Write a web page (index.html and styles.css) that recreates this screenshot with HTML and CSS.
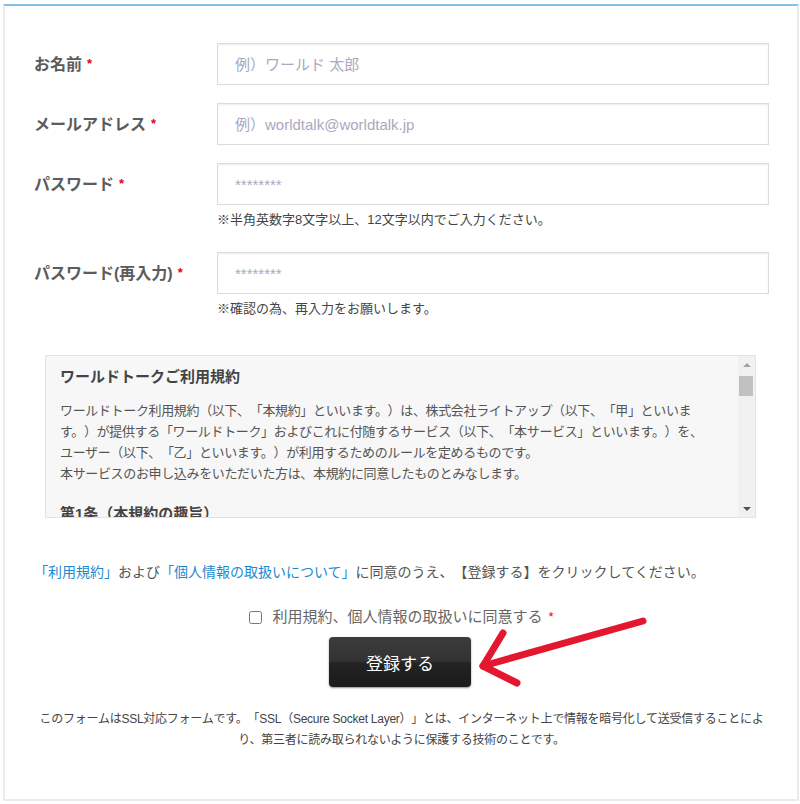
FILE: index.html
```html
<!DOCTYPE html>
<html lang="ja">
<head>
<meta charset="utf-8">
<title>会員登録</title>
<link rel="stylesheet" href="styles.css">
</head>
<body>
<form class="card">
  <div class="fields">
    <div class="row">
      <label class="label" for="name">お名前<span class="req">*</span></label>
      <div class="field"><input id="name" class="input" type="text" placeholder="例）ワールド 太郎"></div>
    </div>
    <div class="row">
      <label class="label" for="mail">メールアドレス<span class="req">*</span></label>
      <div class="field"><input id="mail" class="input" type="email" placeholder="例）worldtalk@worldtalk.jp"></div>
    </div>
    <div class="row">
      <label class="label" for="pw">パスワード<span class="req">*</span></label>
      <div class="field">
        <input id="pw" class="input" type="password" placeholder="********">
        <p class="hint">※半角英数字8文字以上、12文字以内でご入力ください。</p>
      </div>
    </div>
    <div class="row">
      <label class="label" for="pw2">パスワード(再入力)<span class="req">*</span></label>
      <div class="field">
        <input id="pw2" class="input" type="password" placeholder="********">
        <p class="hint">※確認の為、再入力をお願いします。</p>
      </div>
    </div>
  </div>

  <div class="terms">
    <div class="terms-body">
      <h3 class="terms-title">ワールドトークご利用規約</h3>
      <p class="terms-text">ワールドトーク利用規約（以下、「本規約」といいます。）は、株式会社ライトアップ（以下、「甲」といいます。）が提供する「ワールドトーク」およびこれに付随するサービス（以下、「本サービス」といいます。）を、ユーザー（以下、「乙」といいます。）が利用するためのルールを定めるものです。<br>本サービスのお申し込みをいただいた方は、本規約に同意したものとみなします。</p>
      <h4 class="terms-heading">第1条（本規約の趣旨）</h4>
    </div>
    <div class="scrollbar" aria-hidden="true">
      <span class="sb-btn"><span class="tri-up"></span></span>
      <span class="sb-thumb"></span>
      <span class="sb-fill"></span>
      <span class="sb-btn"><span class="tri-down"></span></span>
    </div>
  </div>

  <p class="agree"><a href="#" class="link">「利用規約」</a>および<a href="#" class="link">「個人情報の取扱いについて」</a>に同意のうえ、【登録する】をクリックしてください。</p>

  <label class="consent"><input type="checkbox" class="check">利用規約、個人情報の取扱いに同意する<span class="req">*</span></label>

  <div class="actions"><button type="button" class="submit">登録する</button></div>

  <p class="note">このフォームはSSL対応フォームです。「SSL（Secure Socket Layer）」とは、インターネット上で情報を暗号化して送受信することにより、第三者に読み取られないように保護する技術のことです。</p>
</form>

<svg class="arrow" width="185" height="85" viewBox="0 0 185 85" aria-hidden="true">
  <path d="M173 11 L13 56" fill="none" stroke="#e3172e" stroke-width="7" stroke-linecap="round"/>
  <path d="M33 23 L13 56 L47 73" fill="none" stroke="#e3172e" stroke-width="7" stroke-linecap="round" stroke-linejoin="round"/>
</svg>
</body>
</html>
```

FILE: styles.css
```css
* { box-sizing: border-box; }
html, body { margin: 0; padding: 0; background: #fff; }
body {
  font-family: "Liberation Sans", "Noto Sans CJK JP", sans-serif;
  color: #555;
  text-spacing-trim: space-all;
}

.card {
  margin: 4px 1px 1px 3px;
  border: 2px solid #ebebeb;
  border-top-color: #84c0e6;
  padding: 37px 28px 48px 29px;
}

.fields { display: flex; flex-direction: column; gap: 18px; }
.row { display: grid; grid-template-columns: 183px 1fr; }
.label {
  height: 42px;
  display: flex;
  align-items: center;
  padding-bottom: 2px;
  font-size: 16px;
  font-weight: 700;
  color: #5c5c5c;
}
.req { color: #e60012; font-size: 13px; font-weight: 700; margin-left: 5px; }

.input {
  display: block;
  width: 100%;
  height: 42px;
  border: 1px solid #dcdcdc;
  box-shadow: inset 0 1px 2px rgba(0, 0, 0, .08);
  padding: 0 17px;
  font: 15px "Liberation Sans", "Noto Sans CJK JP", sans-serif;
  color: #333;
  background: #fff;
  outline: none;
  border-radius: 0;
}
.input::placeholder { color: #a9a9bf; }
.hint { margin: 6px 0 5px; font-size: 13px; line-height: 18px; color: #444; }

.terms {
  display: flex;
  height: 163px;
  margin: 32px 13px 0 11px;
  border: 1px solid #e3e3e3;
  background: #f7f7f7;
}
.terms-body { flex: 1; overflow: hidden; padding: 10px 28px 0 14px; }
.terms-title { margin: 0; font-size: 15px; line-height: 22px; font-weight: 700; color: #444; }
.terms-text { margin: 12px 0 0; font-size: 13px; line-height: 21px; letter-spacing: -0.35px; color: #555; }
.terms-heading { margin: 19px 0 0; font-size: 15px; line-height: 22px; font-weight: 700; color: #444; }

.scrollbar { width: 17px; display: flex; flex-direction: column; background: #f1f1f1; }
.sb-btn { height: 17px; display: flex; align-items: center; justify-content: center; }
.tri-up { width: 0; height: 0; border-left: 4px solid transparent; border-right: 4px solid transparent; border-bottom: 4px solid #a3a3a3; }
.tri-down { width: 0; height: 0; border-left: 4px solid transparent; border-right: 4px solid transparent; border-top: 4px solid #505050; }
.sb-thumb { height: 20px; margin: 3px 2px 0 1px; background: #c1c1c1; }
.sb-fill { flex: 1; }

.agree { margin: 43px 0 0; font-size: 14px; line-height: 22px; color: #555; }
.link { color: #1c8ad0; text-decoration: none; }

.consent {
  margin-top: 23px;
  display: flex;
  justify-content: center;
  align-items: center;
  font-size: 15px;
  line-height: 22px;
  color: #666;
}
.check { width: 13px; height: 13px; margin: 0 10px 0 0; }
.consent .req { font-weight: 400; margin-left: 6px; }

.actions { margin-top: 9px; display: flex; justify-content: center; }
.submit {
  width: 142px;
  height: 50px;
  margin-right: 3px;
  border: 0;
  border-radius: 4px;
  background: linear-gradient(#3c3c3c, #333 47%, #232323 53%, #1b1b1b);
  color: #fff;
  font: 17px "Noto Sans CJK JP", sans-serif;
  box-shadow: 0 1px 2px rgba(0, 0, 0, .45);
  cursor: pointer;
}

.note { margin: 22px 0 0; text-align: center; font-size: 12px; line-height: 21px; letter-spacing: -0.25px; color: #444; }

.arrow { position: absolute; left: 470px; top: 610px; }
```
